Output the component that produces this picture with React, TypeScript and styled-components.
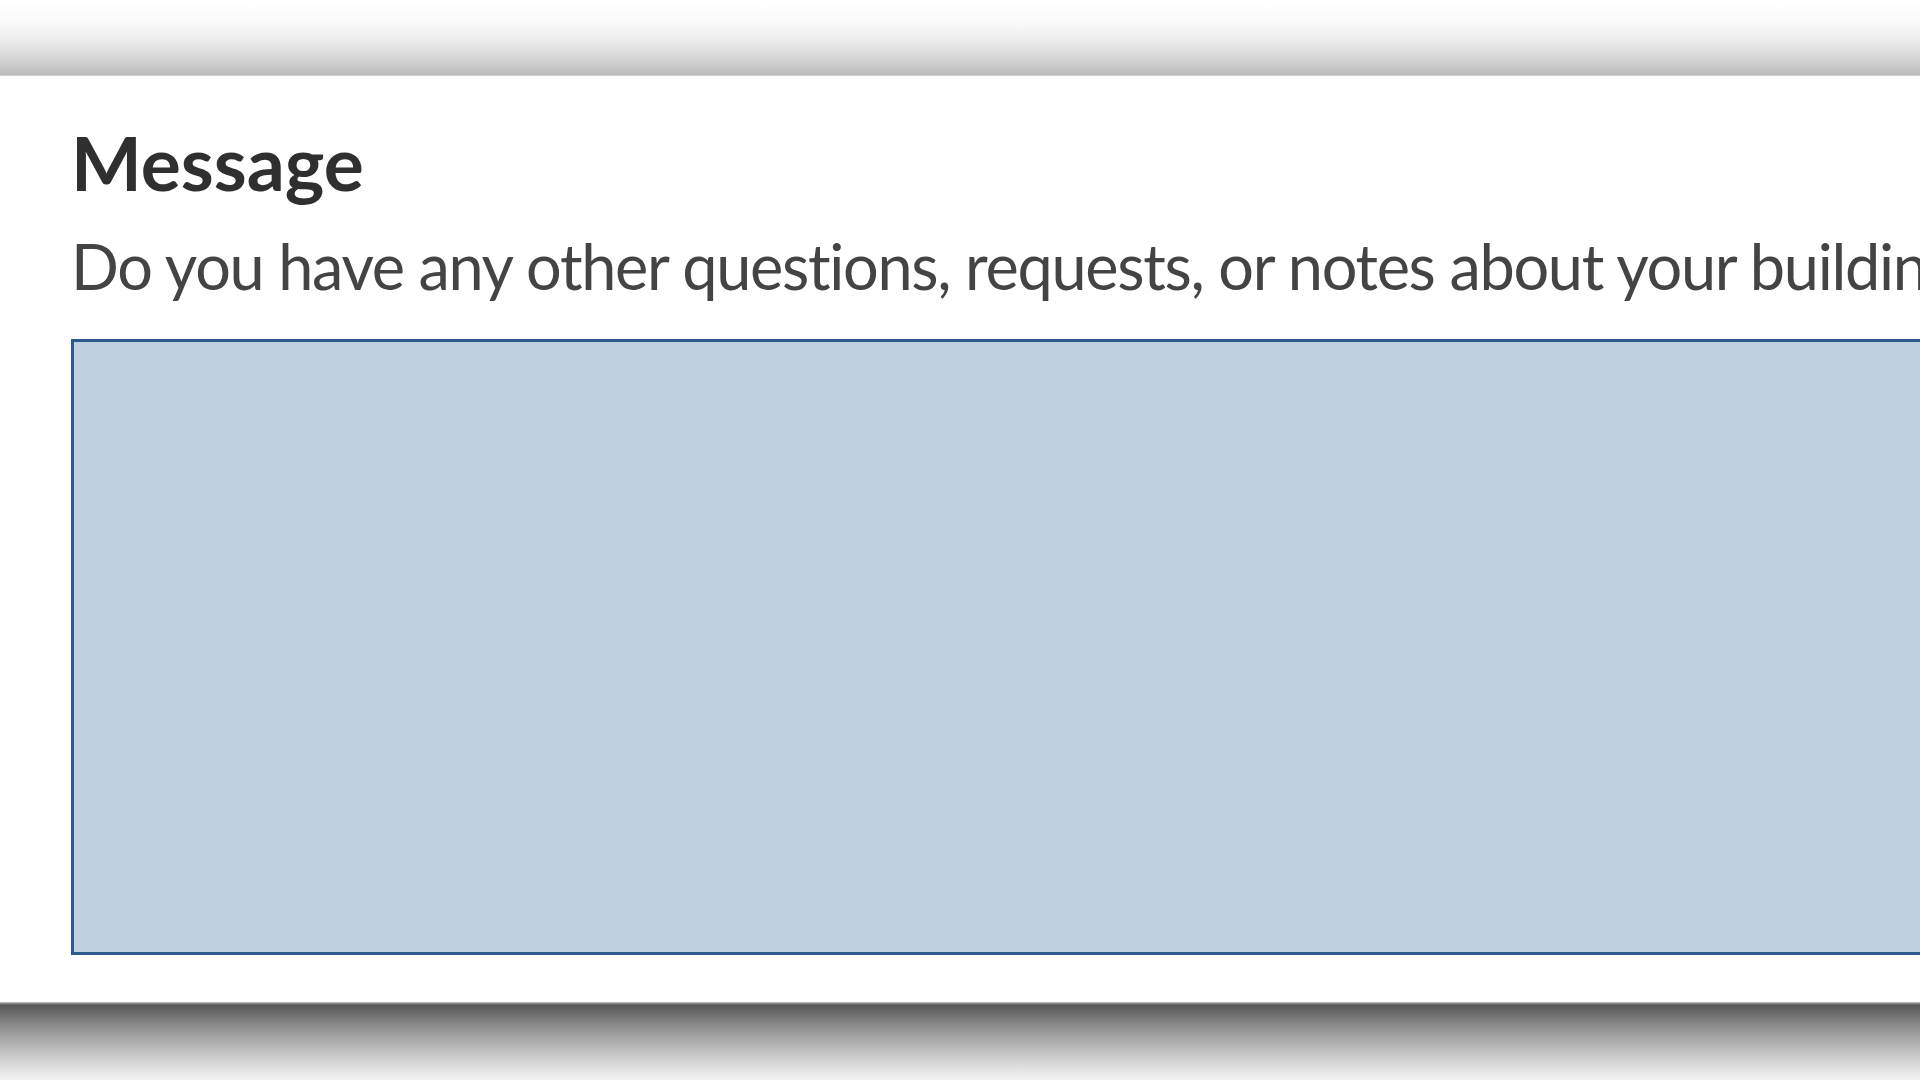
import React from 'react';
import styled, { createGlobalStyle } from 'styled-components';

const GlobalStyle = createGlobalStyle`
  html, body {
    margin: 0;
    padding: 0;
    background: #fff;
    overflow: hidden;
  }
  body {
    font-family: Lato, "Liberation Sans", sans-serif;
  }
`;

const Page = styled.div`
  display: flex;
  flex-direction: column;
  width: 1920px;
  height: 1080px;
  overflow: hidden;
`;

// shadow strips above and below the form card
const TopShade = styled.div`
  flex: 0 0 76px;
  background: linear-gradient(
    to bottom,
    #ffffff 0%,
    #fafafa 30%,
    #eaeaea 55%,
    #d2d2d2 80%,
    #bcbcbc 98%,
    #d8d8d8 100%
  );
`;

const BottomShade = styled.div`
  flex: 1 1 auto;
  background: linear-gradient(
    to bottom,
    #cfcfcf 0px,
    #9a9a9a 1px,
    #575757 3px,
    #6e6e6e 12px,
    #969696 28px,
    #bababa 46px,
    #d9d9d9 62px,
    #ededed 74px,
    #f0f0f0 100%
  );
`;

const Card = styled.section`
  flex: 0 0 926px;
  box-sizing: border-box;
  background: #fff;
  padding: 41px 0 0 71px;
  overflow: hidden;
`;

const Title = styled.h2`
  margin: 0;
  font-family: Lato, "Liberation Sans", sans-serif;
  font-weight: 700;
  font-size: 75px;
  line-height: 90px;
  color: #2f2f2f;
  white-space: nowrap;
`;

const Hint = styled.p`
  margin: 20px 0 0;
  font-family: Lato, "Liberation Sans", sans-serif;
  font-weight: 400;
  font-size: 63px;
  line-height: 77px;
  letter-spacing: -1.3px;
  font-variant-ligatures: none;
  color: #444;
  white-space: nowrap;
`;

const MessageBox = styled.textarea`
  display: block;
  box-sizing: border-box;
  margin-top: 35px;
  width: 2000px;
  height: 616px;
  border: 3px solid #2d5a8c;
  border-radius: 0;
  background: #bfd1df;
  resize: none;
  outline: none;
  font-family: Lato, "Liberation Sans", sans-serif;
  font-size: 48px;
`;

export default function App() {
  return (
    <Page>
      <GlobalStyle />
      <TopShade />
      <Card>
        <Title>Message</Title>
        <Hint>Do you have any other questions, requests, or notes about your building?</Hint>
        <MessageBox name="message" />
      </Card>
      <BottomShade />
    </Page>
  );
}
